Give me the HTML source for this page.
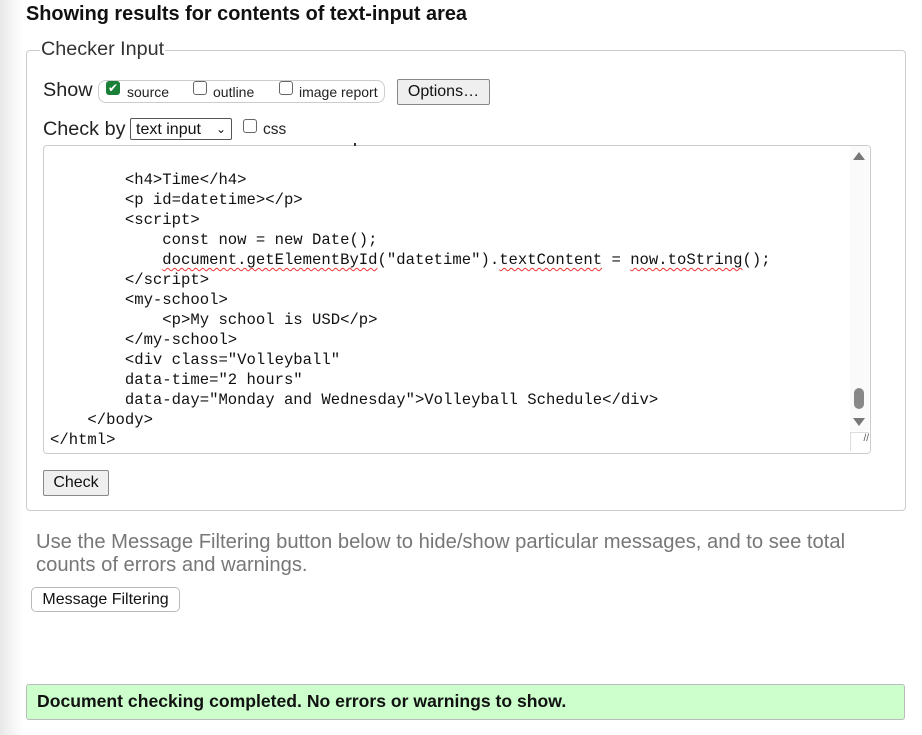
<!DOCTYPE html>
<html><head><meta charset="utf-8"><style>
body{margin:0;width:922px;height:735px;background:#fff;font-family:"Liberation Sans",sans-serif;position:relative;overflow:hidden}
.shade{position:absolute;left:0;top:0;width:22px;height:735px;background:linear-gradient(90deg,#e8e8e8,#f8f8f8 70%,#fff)}
h2{position:absolute;left:26px;top:3px;margin:0;font-size:19.9px;font-weight:bold;color:#111}
.fs{position:absolute;left:26px;top:50px;width:878px;height:459px;border:1px solid #ccc;border-radius:4px}
.legend{position:absolute;left:40px;top:38px;background:#fff;padding:0 1px;font-size:19.8px;color:#333}
.row{position:absolute;font-size:19.8px;color:#222}
.cb{display:inline-block;width:12px;height:12px;border:1.5px solid #666;border-radius:3px;vertical-align:-1px}
.pill{position:absolute;left:98px;top:80px;width:285px;height:21px;border:1px solid #ccc;border-radius:8px}
.small{position:absolute;font-size:14px;color:#222}
.btn{position:absolute;border:1px solid #888;background:#efefef;border-radius:2px;font-size:16px;color:#111;box-sizing:border-box;text-align:center}
.ta{position:absolute;left:43px;top:145px;width:826px;height:307px;border:1px solid #ccc;border-radius:4px;overflow:hidden}
pre{position:absolute;left:50px;top:170px;margin:0;font-family:"Liberation Mono",monospace;font-size:15.6px;line-height:20px;color:#111}
.sb{position:absolute;left:850px;top:146px;width:19px;height:285px;background:#fafafa}
.w{text-decoration:underline wavy #e33;text-decoration-thickness:1px;text-underline-offset:3px}
</style></head><body>
<div class="shade"></div>
<h2>Showing results for contents of text-input area</h2>
<div class="fs"></div>
<div class="legend">Checker Input</div>
<div class="row" style="left:43px;top:79px">Show</div>
<div class="pill"></div>
<div style="position:absolute;left:106px;top:81px;width:14px;height:14px;background:#1a7f37;border-radius:3px;color:#fff;font-size:12px;line-height:14px;text-align:center">✔</div>
<div class="small" style="left:127px;top:84px">source</div>
<div class="cb" style="position:absolute;left:193px;top:81px"></div>
<div class="small" style="left:213px;top:84px">outline</div>
<div class="cb" style="position:absolute;left:279px;top:81px"></div>
<div class="small" style="left:299px;top:84px">image report</div>
<div class="btn" style="left:397px;top:79px;width:93px;height:26px;line-height:24px">Options…</div>
<div class="row" style="left:43px;top:118px">Check by</div>
<div style="position:absolute;left:130px;top:118px;width:102px;height:22px;border:1px solid #555;border-radius:2px;font-size:16px;line-height:21px;box-sizing:border-box;padding-left:5px;color:#111">text input <span style="position:absolute;right:5px;top:0;font-size:12px">⌄</span></div>
<div class="cb" style="position:absolute;left:243px;top:119px"></div>
<div class="small" style="left:263px;top:121px;font-size:15.5px">css</div>
<div class="ta"></div>
<pre>        &lt;h4&gt;Time&lt;/h4&gt;
        &lt;p id=datetime&gt;&lt;/p&gt;
        &lt;script&gt;
            const now = new Date();
            <span class="w">document.getElementById</span>("datetime").<span class="w">textContent</span> = <span class="w">now.toString</span>();
        &lt;/script&gt;
        &lt;my-school&gt;
            &lt;p&gt;My school is USD&lt;/p&gt;
        &lt;/my-school&gt;
        &lt;div class="Volleyball"
        data-time="2 hours"
        data-day="Monday and Wednesday"&gt;Volleyball Schedule&lt;/div&gt;
    &lt;/body&gt;
&lt;/html&gt;</pre>
<div style="position:absolute;left:354px;top:143px;width:2px;height:3px;background:#333"></div>
<div class="sb"></div>
<div style="position:absolute;left:853px;top:152px;width:0;height:0;border-left:6px solid transparent;border-right:6px solid transparent;border-bottom:8px solid #777"></div>
<div style="position:absolute;left:854px;top:388px;width:10px;height:21px;background:#888;border-radius:5px"></div>
<div style="position:absolute;left:853px;top:418px;width:0;height:0;border-left:6px solid transparent;border-right:6px solid transparent;border-top:8px solid #777"></div>
<div style="position:absolute;left:850px;top:432px;width:19px;height:19px;border-left:1px solid #ddd;border-top:1px solid #ddd;box-sizing:border-box;font-size:10px;color:#555;text-align:right">//</div>
<div class="btn" style="left:43px;top:470px;width:66px;height:26px;line-height:24px">Check</div>
<div style="position:absolute;left:36px;top:531px;width:860px;font-size:20.2px;line-height:23px;color:#777">Use the Message Filtering button below to hide/show particular messages, and to see total counts of errors and warnings.</div>
<div class="btn" style="left:31px;top:587px;width:149px;height:25px;line-height:23px;background:#fff;border-color:#bbb;border-radius:5px">Message Filtering</div>
<div style="position:absolute;left:26px;top:684px;width:879px;height:36px;background:#ccffcc;border:1px solid #bbb;border-radius:3px;box-sizing:border-box"></div>
<div style="position:absolute;left:37px;top:691px;font-size:17.6px;font-weight:bold;color:#111">Document checking completed. No errors or warnings to show.</div>
</body></html>
